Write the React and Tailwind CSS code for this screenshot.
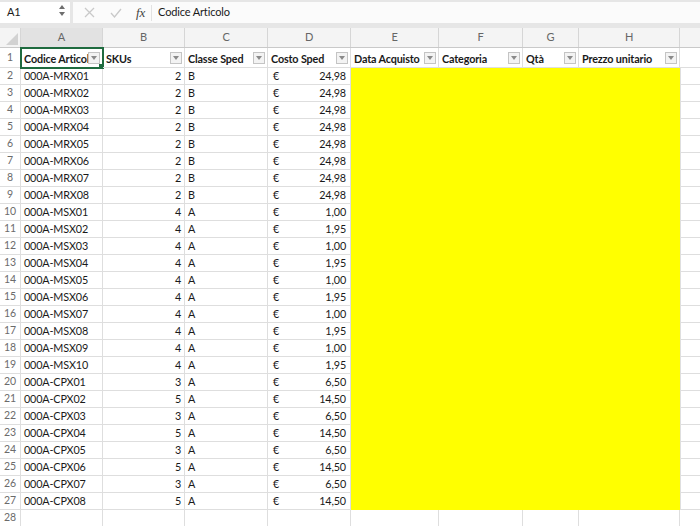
import React from "react";

const COLS = [
  "w-[82px]",
  "w-[82px]",
  "w-[83px]",
  "w-[83px]",
  "w-[88px]",
  "w-[84px]",
  "w-[56px]",
  "w-[101px]",
];
const LETTERS = ["A", "B", "C", "D", "E", "F", "G", "H"];
const HEADERS = [
  "Codice Articolo",
  "SKUs",
  "Classe Sped",
  "Costo Sped",
  "Data Acquisto",
  "Categoria",
  "Qtà",
  "Prezzo unitario",
];

const rows = [
  ...Array.from({ length: 8 }, (_, i) => ({
    code: `000A-MRX0${i + 1}`,
    skus: 2,
    cls: "B",
    cost: "24,98",
  })),
  ...Array.from({ length: 10 }, (_, i) => ({
    code: `000A-MSX${String(i + 1).padStart(2, "0")}`,
    skus: 4,
    cls: "A",
    cost: i % 2 === 0 ? "1,00" : "1,95",
  })),
  ...Array.from({ length: 8 }, (_, i) => ({
    code: `000A-CPX0${i + 1}`,
    skus: i % 2 === 0 ? 3 : 5,
    cls: "A",
    cost: i % 2 === 0 ? "6,50" : "14,50",
  })),
];

function FilterButton() {
  return (
    <span className="absolute right-[2px] top-[4px] flex h-[12px] w-[12px] items-center justify-center border border-[#c4c4c4] bg-[#f3f3f3]">
      <svg width="6" height="4" viewBox="0 0 6 4">
        <path d="M0 0 L6 0 L3 4 Z" fill="#8a8a8a" />
      </svg>
    </span>
  );
}

function RowHeader({ n, h }) {
  return (
    <div
      className={`flex w-[21px] shrink-0 items-center justify-center border-b border-r border-[#dedede] text-[10.5px] text-[#6b6b6b] ${h}`}
    >
      {n}
    </div>
  );
}

export default function App() {
  return (
    <div
      className="h-[526px] w-[700px] overflow-hidden bg-white text-[10.8px] tracking-[-0.15px] text-[#1a1a1a]"
      style={{ fontFamily: "Lato, 'Open Sans', sans-serif" }}
    >
      {/* formula bar */}
      <div className="flex h-[28px] items-start bg-[#e6e6e6] pt-[2px]">
        <div className="relative flex h-[21px] w-[70px] items-center bg-white pl-[7px] text-[11px]">
          A1
          <span className="absolute right-[5px] top-[3px] flex flex-col items-center gap-[3px]">
            <svg width="6" height="4" viewBox="0 0 6 4">
              <path d="M0 4 L6 4 L3 0 Z" fill="#6e6e6e" />
            </svg>
            <svg width="6" height="4" viewBox="0 0 6 4">
              <path d="M0 0 L6 0 L3 4 Z" fill="#6e6e6e" />
            </svg>
          </span>
        </div>
        <div className="ml-[3px] flex h-[21px] flex-1 items-center bg-[#fbfbfb]">
          <svg className="ml-[11px]" width="11" height="11" viewBox="0 0 11 11">
            <path d="M1 1 L10 10 M10 1 L1 10" stroke="#c9c9c9" strokeWidth="1.3" />
          </svg>
          <svg className="ml-[15px]" width="12" height="10" viewBox="0 0 12 10">
            <path d="M1 5 L4.5 9 L11 1" stroke="#c9c9c9" strokeWidth="1.3" fill="none" />
          </svg>
          <span
            className="ml-[14px] text-[13px] italic text-[#444]"
            style={{ fontFamily: "'Liberation Serif', serif" }}
          >
            fx
          </span>
          <span className="ml-[6px] h-[16px] w-px bg-[#e2e2e2]" />
          <span className="ml-[6px] text-[11px]">Codice Articolo</span>
        </div>
      </div>

      {/* column letters */}
      <div className="flex h-[20px] border-b border-[#c9c9c9] bg-[#f4f4f4]">
        <div className="relative w-[21px] shrink-0 border-r border-[#d6d6d6]">
          <svg className="absolute bottom-[2px] right-[2px]" width="12" height="12" viewBox="0 0 12 12">
            <path d="M12 0 L12 12 L0 12 Z" fill="#d2d2d2" />
          </svg>
        </div>
        {LETTERS.map((l, i) => (
          <div
            key={l}
            className={`flex shrink-0 items-center justify-center border-r border-[#d6d6d6] text-[11px] text-[#666] ${COLS[i]} ${i === 0 ? "bg-[#e2e2e2]" : ""}`}
          >
            {l}
          </div>
        ))}
        <div className="flex-1" />
      </div>

      {/* row 1 headers */}
      <div className="flex h-[20px]">
        <RowHeader n={1} h="h-[20px]" />
        {HEADERS.map((t, i) => (
          <div
            key={t}
            className={`relative shrink-0 overflow-hidden whitespace-nowrap border-b border-r border-[#dedede] pl-[3px] pt-[3px] font-bold ${COLS[i]} ${i === 0 ? "outline outline-2 -outline-offset-1 outline-[#1f6b3f]" : ""}`}
          >
            {t}
            <FilterButton />
            {i === 0 && (
              <span className="absolute bottom-[-1px] right-[-1px] h-[4px] w-[4px] bg-[#1f6b3f]" />
            )}
          </div>
        ))}
        <div className="flex-1 border-b border-[#dedede]" />
      </div>

      {/* data rows */}
      {rows.map((r, idx) => (
        <div key={r.code} className="flex h-[17px]">
          <RowHeader n={idx + 2} h="h-[17px]" />
          <div className={`shrink-0 border-b border-r border-[#dedede] pl-[3px] leading-[16px] ${COLS[0]}`}>
            {r.code}
          </div>
          <div className={`shrink-0 border-b border-r border-[#dedede] pr-[3px] text-right leading-[16px] ${COLS[1]}`}>
            {r.skus}
          </div>
          <div className={`shrink-0 border-b border-r border-[#dedede] pl-[3px] leading-[16px] ${COLS[2]}`}>
            {r.cls}
          </div>
          <div className={`flex shrink-0 justify-between border-b border-r border-[#dedede] pl-[5px] pr-[4px] leading-[16px] ${COLS[3]}`}>
            <span>€</span>
            <span>{r.cost}</span>
          </div>
          <div className="w-[329px] shrink-0 bg-[#ffff00]" />
          <div className="flex-1 border-b border-l border-[#dedede]" />
        </div>
      ))}

      {/* row 28 */}
      <div className="flex h-[17px]">
        <RowHeader n={28} h="h-[17px]" />
        {COLS.map((c, i) => (
          <div key={i} className={`shrink-0 border-b border-r border-[#dedede] ${c}`} />
        ))}
        <div className="flex-1 border-b border-[#dedede]" />
      </div>
    </div>
  );
}
